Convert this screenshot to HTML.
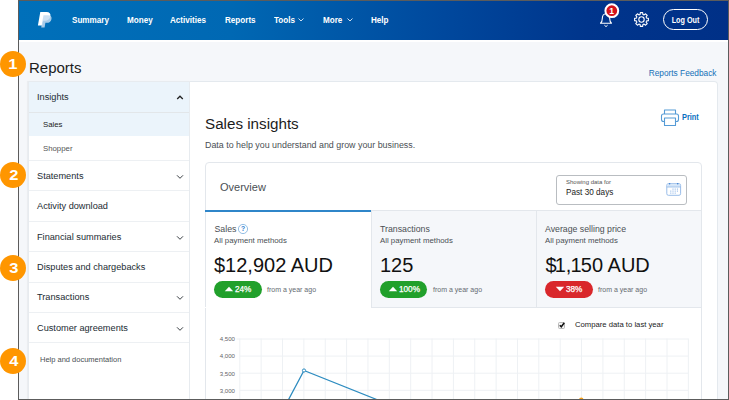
<!DOCTYPE html>
<html lang="en">
<head>
<meta charset="utf-8">
<title>Reports - Sales insights</title>
<style>
*{box-sizing:border-box;margin:0;padding:0}
html,body{width:729px;height:400px;overflow:hidden;background:#fff}
body{font-family:"Liberation Sans",sans-serif;color:#2c2e2f;position:relative}
body *{position:absolute}
.t{white-space:nowrap}
.bg{left:19px;top:1px;width:709px;height:398px;background:#f5f7fa}
.hdr{left:19px;top:1px;width:709px;height:39px;background:linear-gradient(90deg,#0070ba 0%,#0068b3 30%,#00489d 60%,#00358c 80%,#003087 100%)}
.hdrline{left:19px;top:40px;width:709px;height:2px;background:#fff}
.frame{left:18px;top:0;width:711px;height:400px;border:1px solid #5c5c5c;z-index:50}
.nav{color:#fff;font-weight:bold;font-size:9px;line-height:12px;top:14px;transform:scale(.9,1.08);transform-origin:0 75%}
.logout{left:663px;top:9px;width:45px;height:21px;border:1.500px solid #fff;border-radius:11px}
h1{font-weight:normal;font-size:15px;line-height:18px;left:29px;top:58.800px;color:#1c1c1c}
.fb{right:12.500px;top:67.800px;font-size:8.300px;line-height:10px;color:#1470b8}
.side{left:28px;top:81px;width:162px;height:330px;background:#fff;border:1px solid #e7ebef;box-shadow:-1px 0 1px rgba(0,0,0,.04)}
.it{left:29px;font-size:9.200px;line-height:12px;color:#222b33}
.row{left:29px;width:160px;height:1px;background:#edf0f3}
.main{left:190px;top:81px;width:528px;height:330px;background:#fff;border:1px solid #e4e9ee;border-left:none;border-radius:0 4px 0 0}
.card{left:205px;top:162px;width:497px;height:260px;border:1px solid #e3e7ec;border-radius:4px;background:#fff}
.tab{top:210px;height:98px;background:#f5f7fa;border:1px solid #e3e7ec}
.badge{top:281.400px;height:17px;border-radius:9px}
.bt{color:#fff;font-size:8.200px;line-height:10px;top:285.400px;font-weight:normal;-webkit-text-stroke:.25px #fff}
.num{font-size:20px;line-height:24px;color:#111;top:252.500px}
.lbl{font-size:8.750px;line-height:11px;color:#4a4f54;top:223.700px}
.apm{font-size:7.8px;line-height:10px;color:#4a4f54;top:235.700px}
.ago{font-size:7px;line-height:10px;color:#656b71;top:285.400px}
.ax{font-size:6.100px;line-height:8px;color:#5f6368;left:210px;width:25px;text-align:right}
.mark{width:25.500px;height:25.500px;border-radius:13px;background:#ff9600;left:0;z-index:60}
.mark span{left:1.200px;top:0;width:25.500px;height:25.500px;color:#fff;font-weight:bold;font-size:15px;line-height:25.500px;text-align:center;transform:scaleX(1.1)}
</style>
</head>
<body>
<div class="bg"></div>
<div class="hdr"></div>
<div class="hdrline"></div>

<svg style="left:36px;top:10px" width="18" height="20" viewBox="0 0 18 20">
  <path d="M4.300 1.900h6.300c2.900 0 4.300 1.600 3.800 4.300c-.5 2.900-2.600 4.500-5.500 4.500h-1.800l-.9 4.900h-4.300z" fill="#fff"/>
  <path d="M7.500 5.300h4.500c2.600 0 3.900 1.400 3.500 3.600c-.5 2.600-2.300 3.900-4.800 3.900h-1.300l-.8 4.700h-3.400z" fill="#c3daf1" fill-opacity=".85"/>
</svg>
<div class="nav t" style="left:72px">Summary</div>
<div class="nav t" style="left:127px">Money</div>
<div class="nav t" style="left:170px">Activities</div>
<div class="nav t" style="left:225px">Reports</div>
<div class="nav t" style="left:274px">Tools</div>
<div class="nav t" style="left:323px">More</div>
<div class="nav t" style="left:371px">Help</div>
<svg style="left:297.300px;top:17.300px" width="8" height="6" viewBox="0 0 8 6"><path d="M1.500 1.500l2.500 2.500 2.500-2.500" fill="none" stroke="#c9dcf0" stroke-width="1"/></svg>
<svg style="left:346px;top:17.300px" width="8" height="6" viewBox="0 0 8 6"><path d="M1.500 1.500l2.500 2.500 2.500-2.500" fill="none" stroke="#c9dcf0" stroke-width="1"/></svg>

<svg style="left:596.500px;top:3px" width="24" height="26" viewBox="0 0 24 26">
  <path d="M3.500 20.200c1.300-1 1.800-2.400 1.800-4.700 0-2.800 1.300-4.800 3.700-4.800s3.700 2 3.700 4.800c0 2.300.5 3.700 1.800 4.700z" fill="none" stroke="#fff" stroke-width="1.100" stroke-linejoin="round"/>
  <path d="M7.400 22.200l1.600 1.400 1.600-1.400" fill="none" stroke="#fff" stroke-width="1"/>
  <circle cx="14.800" cy="7.700" r="6.400" fill="#d4141c" stroke="#fff" stroke-width="2"/>
  <text x="14.600" y="10.700" font-family="Liberation Sans,sans-serif" font-size="8.500" font-weight="bold" fill="#fff" text-anchor="middle" style="position:static">1</text>
</svg>
<svg style="left:633px;top:11px" width="17" height="17" viewBox="-8.500 -8.500 17 17">
  <g fill="none" stroke="#fff" stroke-width="1.100" stroke-linejoin="round">
  <path d="M5.12 -1.36L6.90 -1.18L6.90 1.18L5.12 1.36L4.59 2.66L5.72 4.04L4.04 5.72L2.66 4.59L1.36 5.12L1.18 6.90L-1.18 6.90L-1.36 5.12L-2.66 4.59L-4.04 5.72L-5.72 4.04L-4.59 2.66L-5.12 1.36L-6.90 1.18L-6.90 -1.18L-5.12 -1.36L-4.59 -2.66L-5.72 -4.04L-4.04 -5.72L-2.66 -4.59L-1.36 -5.12L-1.18 -6.90L1.18 -6.90L1.36 -5.12L2.66 -4.59L4.04 -5.72L5.72 -4.04L4.59 -2.66Z"/>
  <circle r="2.700"/>
  </g>
</svg>
<div class="logout"></div>
<div class="t" style="left:663px;top:14.800px;width:45px;text-align:center;color:#fff;font-weight:bold;font-size:8.500px;line-height:11px;transform:scale(.85,1.05)">Log Out</div>

<h1 class="t">Reports</h1>
<div class="fb t">Reports Feedback</div>

<div class="side"></div>
<div style="left:29px;top:82px;width:160px;height:30px;background:#ebf4fb"></div>
<div style="left:29px;top:113px;width:160px;height:23px;background:#ebf4fb"></div>
<div class="row" style="top:112px;background:#e2e6e9"></div>
<div class="row" style="top:160px"></div>
<div class="row" style="top:190px"></div>
<div class="row" style="top:221px"></div>
<div class="row" style="top:251px"></div>
<div class="row" style="top:282px"></div>
<div class="row" style="top:312px"></div>
<div class="row" style="top:342px"></div>
<div class="it t" style="left:37px;top:91px">Insights</div>
<div class="it t" style="left:43px;top:119px;font-size:7.8px;color:#222">Sales</div>
<div class="it t" style="left:43px;top:143px;font-size:7.8px;color:#555">Shopper</div>
<div class="it t" style="left:37px;top:170px">Statements</div>
<div class="it t" style="left:37px;top:200px">Activity download</div>
<div class="it t" style="left:37px;top:231px">Financial summaries</div>
<div class="it t" style="left:37px;top:261px">Disputes and chargebacks</div>
<div class="it t" style="left:37px;top:291px">Transactions</div>
<div class="it t" style="left:37px;top:322px">Customer agreements</div>
<div class="it t" style="left:40px;top:354px;font-size:7.500px;color:#4a4f54">Help and documentation</div>
<svg style="left:176px;top:94px" width="8" height="7" viewBox="0 0 8 7"><path d="M1.200 5l2.800-2.800 2.800 2.800" fill="none" stroke="#222" stroke-width="1.300"/></svg>
<svg class="chev" style="left:176px;top:173.500px" width="8" height="6" viewBox="0 0 8 6"><path d="M1 1.300l3 3 3-3" fill="none" stroke="#3a3f44" stroke-width="1"/></svg>
<svg class="chev" style="left:176px;top:234.500px" width="8" height="6" viewBox="0 0 8 6"><path d="M1 1.300l3 3 3-3" fill="none" stroke="#3a3f44" stroke-width="1"/></svg>
<svg class="chev" style="left:176px;top:294.500px" width="8" height="6" viewBox="0 0 8 6"><path d="M1 1.300l3 3 3-3" fill="none" stroke="#3a3f44" stroke-width="1"/></svg>
<svg class="chev" style="left:176px;top:325.500px" width="8" height="6" viewBox="0 0 8 6"><path d="M1 1.300l3 3 3-3" fill="none" stroke="#3a3f44" stroke-width="1"/></svg>

<div class="main"></div>
<div class="t" style="left:205px;top:114.700px;font-size:15.200px;line-height:18px;color:#1c1c1c">Sales insights</div>
<div class="t" style="left:205px;top:139.700px;font-size:8.900px;line-height:10px;color:#4a4f54">Data to help you understand and grow your business.</div>
<svg style="left:660px;top:108px" width="20" height="19" viewBox="0 0 20 19">
  <g fill="none" stroke="#559bd6" stroke-width="1.100" stroke-linejoin="round">
  <path d="M4.500 6v-4h11v4"/>
  <rect x="1.500" y="6" width="17" height="7.500" rx="2"/>
  <rect x="4.500" y="10" width="11" height="7.500" fill="#fff"/>
  </g>
</svg>
<div class="t" style="left:682px;top:112px;font-size:9px;line-height:10px;font-weight:bold;color:#0a6fc0;transform:scaleX(.82);transform-origin:0 50%">Print</div>

<div class="card"></div>
<div class="t" style="left:220px;top:180.500px;font-size:11px;line-height:13px;color:#4a4f54">Overview</div>
<div style="left:556px;top:175px;width:131px;height:30px;border:1px solid #b9bdc1;border-radius:3px;background:#fff"></div>
<div class="t" style="left:566px;top:178.200px;font-size:6px;line-height:8px;color:#555">Showing data for</div>
<div class="t" style="left:566px;top:187px;font-size:8.200px;line-height:11px;color:#222">Past 30 days</div>
<svg style="left:666px;top:182px" width="16" height="15" viewBox="0 0 16 15">
  <rect x=".8" y="1.700" width="13.800" height="11.600" rx="1.600" fill="#fff" stroke="#8db6e6" stroke-width=".9"/>
  <path d="M1.300 2.200h12.800v2.600h-12.800z" fill="#d4e5f8"/>
  <path d="M.8 5h13.800" stroke="#8db6e6" stroke-width=".8" fill="none"/>
  <circle cx="3.600" cy="1.700" r=".8" fill="#3f82d2"/><circle cx="11.700" cy="1.700" r=".8" fill="#3f82d2"/>
  <g fill="#7eabe3"><rect x="6.500" y="6.600" width="1" height="1"/><rect x="8.700" y="6.600" width="1" height="1"/><rect x="10.900" y="6.600" width="1" height="1"/>
  <rect x="4.300" y="8.600" width="1" height="1"/><rect x="6.500" y="8.600" width="1" height="1"/><rect x="8.700" y="8.600" width="1" height="1"/><rect x="10.900" y="8.600" width="1" height="1"/>
  <rect x="4.300" y="10.600" width="1" height="1"/><rect x="6.500" y="10.600" width="1" height="1"/><rect x="8.700" y="10.600" width="1" height="1"/></g>
</svg>

<div class="tab" style="left:371px;width:166px"></div>
<div class="tab" style="left:536px;width:166px"></div>
<div style="left:205px;top:209.500px;width:166px;height:2px;background:#2f86c9"></div>
<div style="left:205px;top:307px;width:166px;height:1px;background:#fff"></div>

<div class="lbl t" style="left:214.500px">Sales</div>
<svg style="left:237px;top:223px" width="12" height="12" viewBox="0 0 12 12"><circle cx="6" cy="6" r="4.600" fill="#fff" stroke="#7aaede" stroke-width=".8"/><text x="6" y="8.400" font-family="Liberation Sans,sans-serif" font-size="6.800" font-weight="bold" fill="#2f80cf" text-anchor="middle" style="position:static">?</text></svg>
<div class="apm t" style="left:214px">All payment methods</div>
<div class="num t" style="left:214px">$12,902 AUD</div>
<div class="badge" style="left:214px;width:48px;background:#21a02b"></div>
<svg style="left:224px;top:286px" width="10" height="6" viewBox="0 0 10 6"><path d="M.8 5.200l4.200-4.400 4.200 4.400z" fill="#fff"/></svg>
<div class="bt t" style="left:235px">24%</div>
<div class="ago t" style="left:267px">from a year ago</div>

<div class="lbl t" style="left:380px">Transactions</div>
<div class="apm t" style="left:380px">All payment methods</div>
<div class="num t" style="left:380px">125</div>
<div class="badge" style="left:380px;width:47px;background:#21a02b"></div>
<svg style="left:388px;top:286px" width="10" height="6" viewBox="0 0 10 6"><path d="M.8 5.200l4.200-4.400 4.200 4.400z" fill="#fff"/></svg>
<div class="bt t" style="left:399px">100%</div>
<div class="ago t" style="left:433px">from a year ago</div>

<div class="lbl t" style="left:545px">Average selling price</div>
<div class="apm t" style="left:545px">All payment methods</div>
<div class="num t" style="left:545.500px">$<span style="position:static;margin-left:-2px">1,</span><span style="position:static;margin-left:-.8px">1</span><span style="position:static;margin-left:-.8px">50 AUD</span></div>
<div class="badge" style="left:545px;width:48px;background:#d9272b"></div>
<svg style="left:555px;top:286px" width="10" height="6" viewBox="0 0 10 6"><path d="M.8 .8l4.200 4.400 4.200-4.400z" fill="#fff"/></svg>
<div class="bt t" style="left:566px">38%</div>
<div class="ago t" style="left:598px">from a year ago</div>

<div style="left:558px;top:322px;width:7px;height:7px;border:1px solid #b8b8b8;border-radius:1.500px;background:#f4f4f4"></div>
<svg style="left:558px;top:321px" width="8" height="8" viewBox="0 0 8 8"><path d="M1.800 4.200l1.500 1.600 3-4" fill="none" stroke="#111" stroke-width="1.500"/></svg>
<div class="t" style="left:575px;top:320px;font-size:7.700px;line-height:10px;color:#222">Compare data to last year</div>

<svg style="left:0;top:0" width="729" height="400" viewBox="0 0 729 400">
  <g stroke="#eef1f4" stroke-width="1" fill="none"><line x1="236.5" y1="339.0" x2="688.4" y2="339.0"/><line x1="239.8" y1="356.1" x2="688.4" y2="356.1"/><line x1="239.8" y1="373.2" x2="688.4" y2="373.2"/><line x1="239.8" y1="390.3" x2="688.4" y2="390.3"/><line x1="239.80" y1="338.5" x2="239.80" y2="400"/><line x1="261.16" y1="338.5" x2="261.16" y2="400"/><line x1="282.52" y1="338.5" x2="282.52" y2="400"/><line x1="303.88" y1="338.5" x2="303.88" y2="400"/><line x1="325.24" y1="338.5" x2="325.24" y2="400"/><line x1="346.60" y1="338.5" x2="346.60" y2="400"/><line x1="367.96" y1="338.5" x2="367.96" y2="400"/><line x1="389.32" y1="338.5" x2="389.32" y2="400"/><line x1="410.68" y1="338.5" x2="410.68" y2="400"/><line x1="432.04" y1="338.5" x2="432.04" y2="400"/><line x1="453.40" y1="338.5" x2="453.40" y2="400"/><line x1="474.76" y1="338.5" x2="474.76" y2="400"/><line x1="496.12" y1="338.5" x2="496.12" y2="400"/><line x1="517.48" y1="338.5" x2="517.48" y2="400"/><line x1="538.84" y1="338.5" x2="538.84" y2="400"/><line x1="560.20" y1="338.5" x2="560.20" y2="400"/><line x1="581.56" y1="338.5" x2="581.56" y2="400"/><line x1="602.92" y1="338.5" x2="602.92" y2="400"/><line x1="624.28" y1="338.5" x2="624.28" y2="400"/><line x1="645.64" y1="338.5" x2="645.64" y2="400"/><line x1="667.00" y1="338.5" x2="667.00" y2="400"/><line x1="688.36" y1="338.5" x2="688.36" y2="400"/></g>
  <path d="M283 410L304 370.500L378 400" fill="none" stroke="#2d8cc0" stroke-width="1.300"/>
  <circle cx="304" cy="370.500" r="1.600" fill="#fff" stroke="#2d8cc0" stroke-width="1"/>
  <circle cx="581.300" cy="399.600" r="2.200" fill="#f7a11a"/>
</svg>
<div class="ax t" style="top:335.300px">4,500</div>
<div class="ax t" style="top:352.400px">4,000</div>
<div class="ax t" style="top:369.500px">3,500</div>
<div class="ax t" style="top:386.600px">3,000</div>

<div class="frame"></div>
<div class="mark" style="top:51px"><span style="left:0">1</span></div>
<div class="mark" style="top:162px"><span>2</span></div>
<div class="mark" style="top:255px"><span>3</span></div>
<div class="mark" style="top:348px"><span>4</span></div>
</body>
</html>
